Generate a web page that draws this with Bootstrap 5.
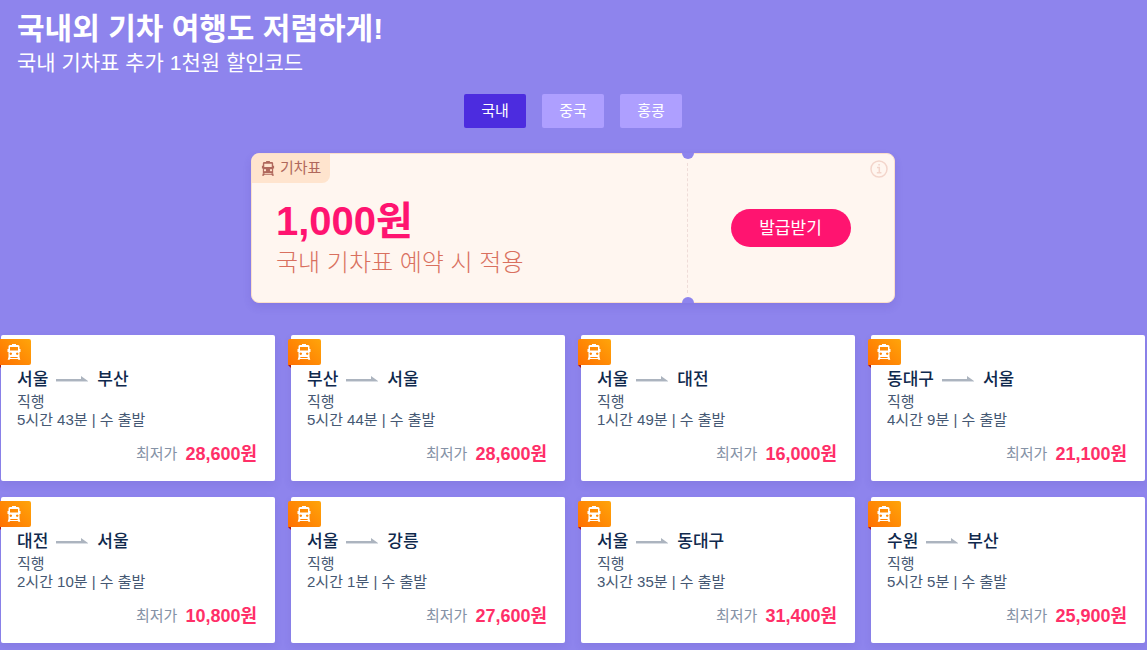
<!DOCTYPE html>
<html lang="ko">
<head>
<meta charset="utf-8">
<meta name="viewport" content="width=device-width, initial-scale=1">
<title>국내외 기차 여행</title>
<link rel="stylesheet" href="https://cdn.jsdelivr.net/npm/bootstrap@5.3.0/dist/css/bootstrap.min.css">
<style>
  body { background: #8e84ed; font-family: "Liberation Sans", "Noto Sans CJK KR", sans-serif; font-size: 15px; overflow-x: hidden; }
  main { padding: 10px 2px 7px 1px; }
  .promo-title { font-size: 30px; line-height: 38px; }
  .promo-sub { font-size: 21px; line-height: 30px; }

  .region-tabs { gap: 16px; margin-top: 16px; }
  .region-tabs .btn { --bs-btn-color: #fff; --bs-btn-bg: #ae9fff; --bs-btn-border-width: 0; --bs-btn-border-radius: 2px;
    --bs-btn-hover-color: #fff; --bs-btn-hover-bg: #9d8cff; --bs-btn-active-color: #fff; --bs-btn-active-bg: #4c2cdf;
    width: 62px; height: 34px; padding: 0; font-size: 15px; }

  .coupon { max-width: 644px; min-height: 150px; margin-top: 25px; background: #fff6f0; border: 1px solid #fbdfcb; border-radius: 8px; box-shadow: 0 4px 8px rgba(60, 40, 160, .12); }
  .coupon-tag { align-self: flex-start; gap: 5px; height: 29px; padding: 0 9px; color: #b0685c; background: #ffe4ce; border-radius: 7px 0 8px 0; }
  .coupon-text { padding: 15px 24px 0; }
  .coupon-amount { font-size: 40px; line-height: 46px; color: #ff1470; }
  .coupon-note { font-size: 24px; line-height: 38px; font-weight: 300; color: #d9705f; }
  .coupon-side { width: 207px; }
  .coupon-side::before { content: ""; position: absolute; left: 0; top: 9px; bottom: 9px; border-left: 1px dashed #efdcd8; }
  .notch { position: absolute; left: -5px; width: 12px; height: 6px; background: #8e84ed; }
  .notch-top { top: -1px; border-radius: 0 0 6px 6px; }
  .notch-bottom { bottom: -1px; border-radius: 6px 6px 0 0; }
  .btn-claim { --bs-btn-color: #fff; --bs-btn-bg: #ff1470; --bs-btn-hover-color: #fff; --bs-btn-hover-bg: #e60d61; --bs-btn-border-width: 0;
    width: 120px; height: 38px; padding: 2px 0 0; font-size: 17px; }
  .btn-info-mark { position: absolute; top: 6px; right: 6px; width: 18px; height: 18px; }

  .fare-grid { display: grid; grid-template-columns: repeat(auto-fill, minmax(250px, 1fr)); gap: 16px; margin-top: 32px; }
  .fare { height: 146px; padding: 32px 18px 13px 16px; background: #fff; border-radius: 2px; color: #455873; box-shadow: 0 4px 8px rgba(60, 50, 140, .1); }
  .fare:hover { color: #455873; }
  .ribbon { position: absolute; left: -3px; top: 4px; width: 33px; height: 26px; padding-right: 1px; background: linear-gradient(45deg, #ff6f00, #ffa50a); border-radius: 2px 2px 2px 0; }
  .ribbon::after { content: ""; position: absolute; left: 0; top: 26px; border-top: 3px solid #a8161c; border-left: 3px solid transparent; }
  .route { gap: 8px; font-size: 17px; line-height: 26px; font-weight: 500; color: #0f294d; }
  .fare-line { line-height: 18px; }
  .lowest { color: #8592a6; }
  .price { font-size: 18px; color: #ff2f68; }
</style>
</head>
<body>
<svg class="d-none" xmlns="http://www.w3.org/2000/svg">
  <symbol id="train" viewBox="0 0 14 16">
    <path fill-rule="evenodd" d="M5 0h4v1h2q1.500 0 1.500 1.500V5h1v3h-1v5h-11V8h-1V5h1V2.500Q1.500 1 3 1h2zM3 3v3.500h8V3zM3.800 8.500a1.200 1.200 0 1 0 .01 0zm6.400 0a1.200 1.200 0 1 0 .01 0z"/>
    <path d="M1.500 13h2l-.3 1h7.600l-.3-1h2l.8 2.800h-2l-.3-.8H3l-.3.8h-2z"/>
  </symbol>
  <symbol id="arrow" viewBox="0 0 33 8">
    <path fill="#acb4bf" d="M0 3h25V0l7 5H0z"/><path fill="#d9dde3" d="M0 5h32v1H0z"/>
  </symbol>
</svg>
<main>
  <header class="px-3 text-white">
    <h1 class="promo-title fw-bold m-0">국내외 기차 여행도 저렴하게!</h1>
    <p class="promo-sub m-0">국내 기차표 추가 1천원 할인코드</p>
  </header>

  <nav class="region-tabs d-flex justify-content-center" aria-label="지역">
    <button type="button" class="btn active" aria-pressed="true">국내</button>
    <button type="button" class="btn">중국</button>
    <button type="button" class="btn">홍콩</button>
  </nav>

  <section class="coupon d-flex mx-auto">
    <div class="d-flex flex-column flex-grow-1">
      <div class="coupon-tag d-flex align-items-center"><svg width="14" height="15" fill="#b0685c" aria-hidden="true"><use href="#train"/></svg>기차표</div>
      <div class="coupon-text">
        <div class="coupon-amount fw-bold">1,000원</div>
        <div class="coupon-note">국내 기차표 예약 시 적용</div>
      </div>
    </div>
    <div class="coupon-side position-relative d-flex align-items-center justify-content-center">
      <span class="notch notch-top"></span><span class="notch notch-bottom"></span>
      <button type="button" class="btn btn-claim rounded-pill">발급받기</button>
      <button type="button" class="btn-info-mark d-flex p-0 border-0 bg-transparent" aria-label="쿠폰 안내">
        <svg width="18" height="18" viewBox="0 0 18 18" fill="none" stroke="#f3d5cb" stroke-width="1.500"><circle cx="9" cy="9" r="8"/><path d="M7 7.500h2.300v5M6.800 12.800h4.600M8.300 4.800h1.600"/></svg>
      </button>
    </div>
  </section>

  <section class="fare-grid" id="fares"></section>
</main>
<script src="https://cdn.jsdelivr.net/npm/bootstrap@5.3.0/dist/js/bootstrap.bundle.min.js"></script>
<script>
  const fares = [
    ["서울", "부산", "5시간 43분", "28,600원"],
    ["부산", "서울", "5시간 44분", "28,600원"],
    ["서울", "대전", "1시간 49분", "16,000원"],
    ["동대구", "서울", "4시간 9분", "21,100원"],
    ["대전", "서울", "2시간 10분", "10,800원"],
    ["서울", "강릉", "2시간 1분", "27,600원"],
    ["서울", "동대구", "3시간 35분", "31,400원"],
    ["수원", "부산", "5시간 5분", "25,900원"]
  ];
  document.getElementById("fares").innerHTML = fares.map(([from, to, time, price]) => `
    <a href="#" class="fare position-relative d-flex flex-column text-decoration-none">
      <span class="ribbon d-flex align-items-center justify-content-center"><svg width="14" height="16" fill="#fff" aria-hidden="true"><use href="#train"/></svg></span>
      <span class="route d-flex align-items-center"><span>${from}</span><svg width="33" height="8" aria-hidden="true"><use href="#arrow"/></svg><span>${to}</span></span>
      <span class="fare-line">직행</span>
      <span class="fare-line">${time} | 수 출발</span>
      <span class="d-flex justify-content-end align-items-center gap-2 mt-auto"><span class="lowest">최저가</span><span class="price fw-bold">${price}</span></span>
    </a>`).join("");
</script>
</body>
</html>
